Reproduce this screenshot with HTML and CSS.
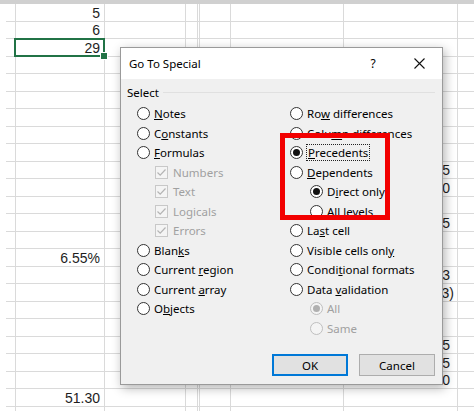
FILE: index.html
```html
<!DOCTYPE html>
<html lang="en">
<head>
<meta charset="utf-8">
<title>Go To Special</title>
<link rel="stylesheet" href="styles.css">
</head>
<body>
<div class="band"></div>
<div class="sheet">
  <div class="row"><div class="b">5</div></div>
  <div class="row"><div class="b">6</div></div>
  <div class="row"><div class="b sel">29</div></div>
  <div class="row"></div>
  <div class="row"></div>
  <div class="row"></div>
  <div class="row"></div>
  <div class="row"></div>
  <div class="row"></div>
  <div class="row"><div class="h">0.25</div></div>
  <div class="row"><div class="h">1.30</div></div>
  <div class="row"></div>
  <div class="row"><div class="h">0.45</div></div>
  <div class="row"></div>
  <div class="row"><div class="b">6.55%</div></div>
  <div class="row"><div class="h">0.13</div></div>
  <div class="row"><div class="h neg">(0.03)</div></div>
  <div class="row"></div>
  <div class="row"></div>
  <div class="row"><div class="h">0.15</div></div>
  <div class="row"><div class="h">0.05</div></div>
  <div class="row"><div class="h">0.20</div></div>
  <div class="row"><div class="b">51.30</div></div>
  <div class="row"></div>
</div>

<div class="dialog">
  <div class="titlebar">
    <div class="title">Go To Special</div>
    <div class="tbtn">?</div>
    <div class="tbtn"><svg width="11" height="11" viewBox="0 0 11 11"><path d="M0.5 0.5L10.5 10.5M10.5 0.5L0.5 10.5" stroke="#111" stroke-width="1.1" fill="none"/></svg></div>
  </div>
  <div class="body">
    <div class="legend">Select</div>
    <div class="cols">
      <div class="col">
        <div class="opt"><span class="radio"></span><span><u>N</u>otes</span></div>
        <div class="opt"><span class="radio"></span><span>C<u>o</u>nstants</span></div>
        <div class="opt"><span class="radio"></span><span><u>F</u>ormulas</span></div>
        <div class="opt sub-l dis"><span class="check"><svg width="11" height="11" viewBox="0 0 11 11"><path d="M1.5 5.5L4.2 8.2L9.5 2.5" stroke="#b4b4b4" stroke-width="1.2" fill="none"/></svg></span><span>Numbers</span></div>
        <div class="opt sub-l dis"><span class="check"><svg width="11" height="11" viewBox="0 0 11 11"><path d="M1.5 5.5L4.2 8.2L9.5 2.5" stroke="#b4b4b4" stroke-width="1.2" fill="none"/></svg></span><span>Text</span></div>
        <div class="opt sub-l dis"><span class="check"><svg width="11" height="11" viewBox="0 0 11 11"><path d="M1.5 5.5L4.2 8.2L9.5 2.5" stroke="#b4b4b4" stroke-width="1.2" fill="none"/></svg></span><span>Logicals</span></div>
        <div class="opt sub-l dis"><span class="check"><svg width="11" height="11" viewBox="0 0 11 11"><path d="M1.5 5.5L4.2 8.2L9.5 2.5" stroke="#b4b4b4" stroke-width="1.2" fill="none"/></svg></span><span>Errors</span></div>
        <div class="opt"><span class="radio"></span><span>Blan<u>k</u>s</span></div>
        <div class="opt"><span class="radio"></span><span>Current <u>r</u>egion</span></div>
        <div class="opt"><span class="radio"></span><span>Current <u>a</u>rray</span></div>
        <div class="opt"><span class="radio"></span><span>O<u>b</u>jects</span></div>
      </div>
      <div class="col">
        <div class="opt"><span class="radio"></span><span>Ro<u>w</u> differences</span></div>
        <div class="opt"><span class="radio"></span><span>Colu<u>m</u>n differences</span></div>
        <div class="opt"><span class="radio on"></span><span class="focus"><u>P</u>recedents</span></div>
        <div class="opt"><span class="radio"></span><span><u>D</u>ependents</span></div>
        <div class="opt sub-r"><span class="radio on"></span><span>D<u>i</u>rect only</span></div>
        <div class="opt sub-r"><span class="radio"></span><span>All <u>l</u>evels</span></div>
        <div class="opt"><span class="radio"></span><span>La<u>s</u>t cell</span></div>
        <div class="opt"><span class="radio"></span><span>Visible cells onl<u>y</u></span></div>
        <div class="opt"><span class="radio"></span><span>Condi<u>t</u>ional formats</span></div>
        <div class="opt"><span class="radio"></span><span>Data <u>v</u>alidation</span></div>
        <div class="opt sub-r dis"><span class="radio on"></span><span>All</span></div>
        <div class="opt sub-r dis"><span class="radio"></span><span>Same</span></div>
      </div>
    </div>
    <div class="buttons">
      <div class="btn default">OK</div>
      <div class="btn">Cancel</div>
    </div>
  </div>
</div>

<div class="mark"></div>
</body>
</html>
```

FILE: styles.css
```css
* { box-sizing: border-box; }
html, body { margin: 0; height: 411px; overflow: hidden; background: #fff; }
body { position: relative; font-family: "Liberation Sans", Arial, sans-serif; }

.band { height: 4px; background: #d0d0d0; }

.sheet {
  --g: #dadada;
  margin-left: 6px;
  background-image: linear-gradient(to right,
    transparent 9px, var(--g) 9px 10px,
    transparent 10px 98px, var(--g) 98px 99px,
    transparent 99px 179px, var(--g) 179px 180px,
    transparent 180px 191px, var(--g) 191px 192px,
    transparent 192px 193px, var(--g) 193px 194px,
    transparent 194px 224px, var(--g) 224px 225px,
    transparent 225px 337px, var(--g) 337px 338px,
    transparent 338px 451px, var(--g) 451px 452px,
    transparent 452px);
}
.row {
  display: grid;
  grid-template-columns: 9px 89px 353px 1fr;
  height: 17.5px;
  border-bottom: 1px solid var(--g);
  align-items: end;
  padding-bottom: 1px;
  font-size: 14px;
  line-height: 14px;
  color: #1e1e1e;
}
.b { grid-column: 2; text-align: right; padding-right: 4px; }
.h { grid-column: 3; text-align: right; padding-right: 7px; }
.h.neg { padding-right: 3px; }
.sel {
  position: relative;
  align-self: stretch;
  margin-bottom: -1px;
  display: flex;
  align-items: flex-end;
  justify-content: flex-end;
  padding-bottom: 1px;
  box-shadow: 0 0 0 1px #217346, inset 0 0 0 1px #217346;
}
.sel::after {
  content: "";
  position: absolute;
  right: -4px;
  bottom: -4px;
  width: 6px;
  height: 6px;
  background: #217346;
  border: 1px solid #fff;
}

.dialog {
  position: absolute;
  left: 120px;
  top: 47px;
  width: 323px;
  height: 338px;
  border: 1px solid #9a9a9a;
  background: #f0f0f0;
  box-shadow: 2px 3px 10px rgba(0, 0, 0, 0.3);
  display: flex;
  flex-direction: column;
  font-family: "Segoe UI", "Noto Sans", sans-serif;
  font-size: 11.5px;
  color: #000;
}
.titlebar { height: 31px; background: #fff; display: flex; align-items: center; flex: none; }
.title { flex: 1; padding-left: 8px; }
.tbtn { width: 46px; height: 31px; display: flex; align-items: center; justify-content: center; font-size: 12px; }

.body { flex: 1; display: flex; flex-direction: column; padding: 5px 7px 8px 6px; }
.legend { display: flex; align-items: center; height: 16px; }
.legend::after { content: ""; flex: 1; border-top: 1px solid #e0e0e0; margin-left: 4px; }
.cols { display: grid; grid-template-columns: 153px 1fr; padding-left: 10px; margin-top: 4px; }
.opt { display: flex; align-items: center; gap: 4px; height: 19.5px; white-space: nowrap; }
.sub-l { margin-left: 18px; gap: 5px; }
.sub-r { margin-left: 20px; }
.radio {
  flex: none;
  width: 13px; height: 13px;
  border: 1px solid #333;
  border-radius: 50%;
  background: #fff;
  display: flex; align-items: center; justify-content: center;
}
.radio.on::after { content: ""; width: 7px; height: 7px; border-radius: 50%; background: #111; }
.check {
  flex: none;
  width: 13px; height: 13px;
  border: 1px solid #c8c8c8;
  background: #f4f4f4;
  display: flex; align-items: center; justify-content: center;
}
.dis { color: #a0a0a0; }
.dis .radio { border-color: #bfbfbf; background: #f4f4f4; }
.dis .radio.on::after { background: #b0b0b0; }
.focus { outline: 1px dotted #222; padding: 0 1px; }

.buttons { margin-top: auto; display: flex; justify-content: flex-end; gap: 11px; }
.btn {
  width: 76px; height: 22px;
  border: 1px solid #adadad;
  background: #e1e1e1;
  display: flex; align-items: center; justify-content: center;
}
.btn.default { border: 2px solid #0078d7; }

.mark {
  position: absolute;
  left: 280px;
  top: 133px;
  width: 110px;
  height: 87px;
  border: 5px solid #f20000;
}
```
